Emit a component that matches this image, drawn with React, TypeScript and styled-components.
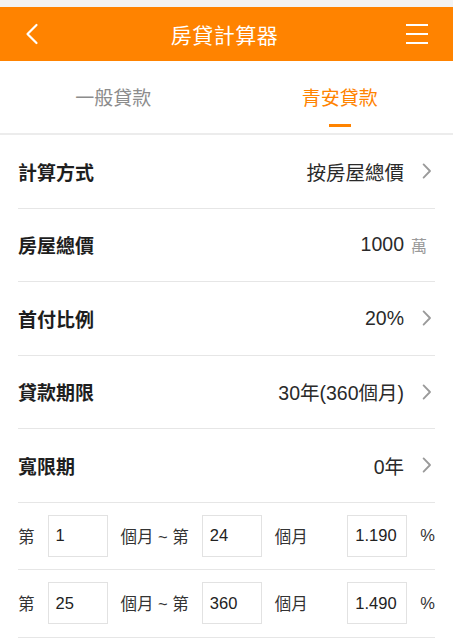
import React from "react";
import styled, { createGlobalStyle } from "styled-components";

const ORANGE = "#ff8300";
const LATIN = `"Liberation Sans", "Noto Sans CJK TC", sans-serif`;

const GlobalStyle = createGlobalStyle`
  html, body {
    margin: 0;
    padding: 0;
    background: #fff;
    font-family: "Noto Sans CJK TC", "Noto Sans", "Liberation Sans", sans-serif;
  }
`;

type Option = { label: string; value: string; unit?: string };

const OPTIONS: Option[] = [
  { label: "計算方式", value: "按房屋總價" },
  { label: "房屋總價", value: "1000", unit: "萬" },
  { label: "首付比例", value: "20%" },
  { label: "貸款期限", value: "30年(360個月)" },
  { label: "寬限期", value: "0年" },
];

const RATES = [
  { from: "1", to: "24", rate: "1.190" },
  { from: "25", to: "360", rate: "1.490" },
];

const Chevron = ({ color, size = 14 }: { color: string; size?: number }) => (
  <svg width={size * 0.6} height={size} viewBox="0 0 8 14" fill="none">
    <path d="M1.2 1.2 L6.8 7 L1.2 12.8" stroke={color} strokeWidth="1.6" strokeLinecap="round" strokeLinejoin="round" />
  </svg>
);

const App: React.FC = () => {
  return (
    <Page>
      <GlobalStyle />
      <StatusStrip />
      <Header>
        <HeaderButton>
          <svg width="14" height="22" viewBox="0 0 14 22" fill="none">
            <path d="M11.5 2 L2.5 11 L11.5 20" stroke="#fff" strokeWidth="2.2" strokeLinecap="round" strokeLinejoin="round" />
          </svg>
        </HeaderButton>
        <Title>房貸計算器</Title>
        <HeaderButton>
          <svg width="24" height="22" viewBox="0 0 24 22" fill="none">
            <path d="M1 2h22M1 11h22M1 20h22" stroke="#fff" strokeWidth="2" />
          </svg>
        </HeaderButton>
      </Header>
      <Tabs>
        <Tab>一般貸款</Tab>
        <Tab $active>青安貸款</Tab>
      </Tabs>
      <List>
        {OPTIONS.map((o) => (
          <Row key={o.label}>
            <Label>{o.label}</Label>
            <Value>{o.value}</Value>
            <Trailing $unit={!!o.unit}>
              {o.unit ? <Unit>{o.unit}</Unit> : <Chevron color="#9a9a9a" size={16} />}
            </Trailing>
          </Row>
        ))}
        {RATES.map((r) => (
          <RateRow key={r.from}>
            <Small>第</Small>
            <Box>{r.from}</Box>
            <Small>個月 ~ 第</Small>
            <Box>{r.to}</Box>
            <Small>個月</Small>
            <Spacer />
            <Box>{r.rate}</Box>
            <Small>%</Small>
          </RateRow>
        ))}
      </List>
    </Page>
  );
};

const Page = styled.div`
  width: 453px;
  min-height: 640px;
  background: #fff;
`;

const StatusStrip = styled.div`
  height: 7px;
  background: #f3f3f3;
`;

const Header = styled.div`
  height: 54px;
  background: ${ORANGE};
  display: flex;
  align-items: center;
  justify-content: space-between;
  padding: 0 24px 0 20px;
`;

const HeaderButton = styled.div`
  display: flex;
  align-items: center;
  justify-content: center;
  width: 24px;
  height: 24px;
`;

const Title = styled.div`
  color: #fff;
  font-size: 21px;
  letter-spacing: 0.5px;
`;

const Tabs = styled.div`
  height: 72px;
  display: grid;
  grid-template-columns: 1fr 1fr;
  border-bottom: 2px solid #ececec;
`;

const Tab = styled.div<{ $active?: boolean }>`
  position: relative;
  display: flex;
  align-items: center;
  justify-content: center;
  padding-bottom: 2px;
  font-size: 19px;
  color: ${({ $active }) => ($active ? ORANGE : "#8c8c8c")};

  &::after {
    content: "";
    display: ${({ $active }) => ($active ? "block" : "none")};
    position: absolute;
    bottom: 6px;
    left: 50%;
    width: 22px;
    margin-left: -11px;
    height: 3px;
    background: ${ORANGE};
  }
`;

const List = styled.div`
  padding: 0 18px;
`;

const Row = styled.div`
  height: 72.5px;
  display: flex;
  align-items: center;
  border-bottom: 1px solid #e6e6e6;
`;

const Label = styled.div`
  flex: 1;
  font-size: 19px;
  font-weight: 700;
  color: #1e1e1e;
`;

const Value = styled.div`
  font-size: 19.5px;
  color: #2a2a2a;
  font-family: ${LATIN};
`;

const Trailing = styled.div<{ $unit?: boolean }>`
  width: 31px;
  display: flex;
  justify-content: flex-end;
  padding-right: ${({ $unit }) => ($unit ? "8px" : "3px")};
  box-sizing: border-box;
`;

const Unit = styled.span`
  font-size: 16px;
  color: #9a9a9a;
`;

const RateRow = styled.div`
  height: 66.5px;
  display: flex;
  align-items: center;
  gap: 13px;
  border-bottom: 1px solid #e6e6e6;
`;

const Small = styled.div`
  font-size: 16.5px;
  color: #333;
  font-family: ${LATIN};
`;

const Box = styled.div`
  width: 60px;
  height: 42px;
  box-sizing: border-box;
  border: 1px solid #e2e2e2;
  padding-left: 7px;
  display: flex;
  align-items: center;
  font-size: 16.5px;
  color: #222;
  font-family: "Liberation Sans", "Noto Sans", sans-serif;
`;

const Spacer = styled.div`
  flex: 1;
`;

export default App;
